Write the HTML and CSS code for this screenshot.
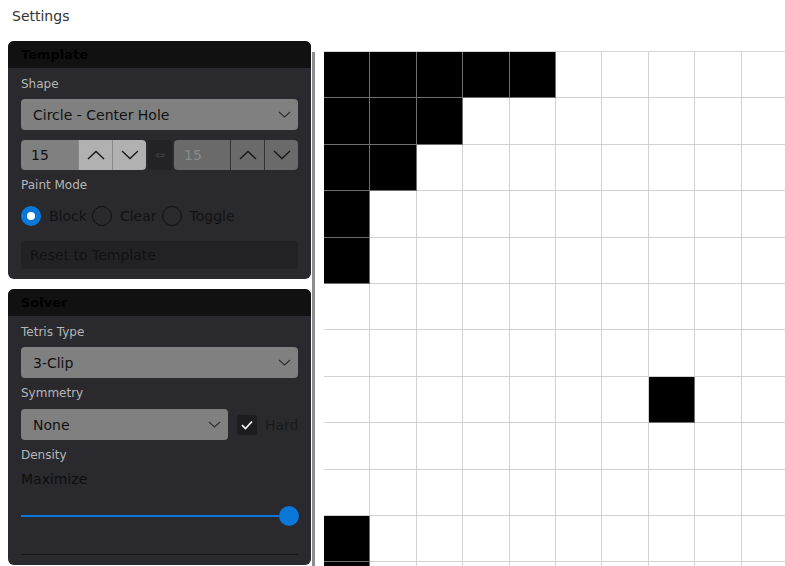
FILE: index.html
```html
<!DOCTYPE html>
<html lang="en">
<head>
<meta charset="UTF-8" />
<meta name="viewport" content="width=device-width, initial-scale=1" />
<title>Settings</title>
<link rel="stylesheet" href="styles.css">
</head>
<body>
<header class="title">Settings</header>
<div class="layout">
  <aside class="sidebar">
    <section class="panel">
      <div class="panel-head">Template</div>
      <div class="panel-body">
        <div class="label">Shape</div>
        <div class="select mt-7">
          <span>Circle - Center Hole</span>
          <svg class="chev" width="13" height="7" viewBox="0 0 13 7"><polyline points="1,1 6.5,6 12,1" /></svg>
        </div>
        <div class="num-row mt-10">
          <div class="num-group">
            <div class="num-field">15</div>
            <div class="num-btn"><svg width="18" height="10" viewBox="0 0 18 10"><polyline points="1,9 9,1.5 17,9" /></svg></div>
            <div class="num-btn"><svg width="18" height="10" viewBox="0 0 18 10"><polyline points="1,1 9,8.5 17,1" /></svg></div>
          </div>
          <div class="swap">&#8660;</div>
          <div class="num-group disabled">
            <div class="num-field">15</div>
            <div class="num-btn"><svg width="18" height="10" viewBox="0 0 18 10"><polyline points="1,9 9,1.5 17,9" /></svg></div>
            <div class="num-btn"><svg width="18" height="10" viewBox="0 0 18 10"><polyline points="1,1 9,8.5 17,1" /></svg></div>
          </div>
        </div>
        <div class="label mt-7">Paint Mode</div>
        <div class="radios mt-13">
          <span class="radio checked"></span><span class="radio-text">Block</span>
          <span class="radio"></span><span class="radio-text">Clear</span>
          <span class="radio"></span><span class="radio-text">Toggle</span>
        </div>
        <div class="button mt-15">Reset to Template</div>
      </div>
    </section>

    <section class="panel">
      <div class="panel-head">Solver</div>
      <div class="panel-body">
        <div class="label">Tetris Type</div>
        <div class="select mt-7">
          <span>3-Clip</span>
          <svg class="chev" width="13" height="7" viewBox="0 0 13 7"><polyline points="1,1 6.5,6 12,1" /></svg>
        </div>
        <div class="label mt-7">Symmetry</div>
        <div class="sym-row mt-8">
          <div class="select narrow">
            <span>None</span>
            <svg class="chev" width="13" height="7" viewBox="0 0 13 7"><polyline points="1,1 6.5,6 12,1" /></svg>
          </div>
          <span class="checkbox"><svg width="20" height="20" viewBox="0 0 20 20"><polyline points="5,10 8.5,13.5 15,6.5" /></svg></span>
          <span class="check-text">Hard</span>
        </div>
        <div class="label mt-7">Density</div>
        <div class="text-value mt-6">Maximize</div>
        <div class="slider mt-17">
          <div class="slider-track"></div>
          <div class="slider-thumb"></div>
        </div>
        <div class="rule mt-28"></div>
      </div>
    </section>
  </aside>
  <div class="divider"></div>
  <section class="board" id="board"></section>
</div>
<script>
  // 15x15 circle with a hole in the middle
  const size = 15;
  const edge = [5, 3, 2, 1, 1, 0, 0, 0, 0, 0, 1, 1, 2, 3, 5];
  const board = document.getElementById('board');

  for (let r = 0; r < size; r++) {
    for (let c = 0; c < size; c++) {
      const cell = document.createElement('div');
      cell.className = 'cell';
      const blocked = c < edge[r] || c >= size - edge[r] || (r === 7 && c === 7);
      if (blocked) cell.classList.add('block');
      board.appendChild(cell);
    }
  }
</script>
</body>
</html>
```

FILE: styles.css
```css
* {
  box-sizing: border-box;
}
body {
  margin: 0;
  font-family: 'DejaVu Sans', 'Noto Sans', sans-serif;
  background: #fff;
  overflow: hidden;
  height: 100vh;
}
.title {
  height: 41px;
  padding: 6px 12px 0;
  font-size: 14px;
  line-height: 20px;
  color: #333;
}
.layout {
  display: flex;
  align-items: flex-start;
  padding-left: 8px;
  height: calc(100vh - 41px);
}
.sidebar {
  width: 303px;
  flex-shrink: 0;
  display: flex;
  flex-direction: column;
  gap: 10px;
}
.divider {
  width: 3px;
  flex-shrink: 0;
  align-self: stretch;
  margin: 11px 0 0 1px;
  background: #8e8e8e;
}
.board {
  flex-shrink: 0;
  margin: 10px 0 0 9px;
  display: grid;
  grid-template-columns: repeat(15, 46.4px);
  grid-auto-rows: 46.4px;
  border-top: 1px solid #d6d6d6;
}
.cell {
  background: #fff;
  border-right: 1px solid #d2d2d2;
  border-bottom: 1px solid #d2d2d2;
}
.cell.block {
  background: #000;
  border-color: #6e6e6e;
}

/* panels */
.panel {
  background: #29292e;
  border-radius: 6px;
  overflow: hidden;
}
.panel-head {
  height: 27px;
  background: #111;
  padding: 0 13px;
  font-size: 13px;
  font-weight: bold;
  line-height: 28px;
  color: #000;
}
.panel-body {
  padding: 8px 13px 10px;
}
.mt-6 { margin-top: 6px; }
.mt-7 { margin-top: 7px; }
.mt-8 { margin-top: 8px; }
.mt-10 { margin-top: 10px; }
.mt-13 { margin-top: 13px; }
.mt-15 { margin-top: 15px; }
.mt-17 { margin-top: 17px; }
.mt-28 { margin-top: 28px; }

.label {
  font-size: 12px;
  line-height: 16px;
  color: #b6b6b6;
}
.select {
  height: 31px;
  background: #808080;
  border-radius: 4px;
  display: flex;
  align-items: center;
  justify-content: space-between;
  padding: 0 7px 0 12px;
  font-size: 14px;
  color: #111;
}
.chev polyline {
  fill: none;
  stroke: #2e2e2e;
  stroke-width: 1.1;
}

/* number inputs */
.num-row {
  display: flex;
  height: 30px;
  gap: 2px;
}
.num-group {
  display: flex;
  width: 125px;
  border-radius: 4px;
  overflow: hidden;
}
.num-group.disabled {
  flex: 1;
}
.num-field {
  flex: 1;
  background: #808080;
  font-size: 14px;
  line-height: 30px;
  padding-left: 10px;
  color: #111;
}
.num-btn {
  width: 34px;
  display: flex;
  align-items: center;
  justify-content: center;
  background: #b1b1b1;
  border-left: 1px solid #8a8a8a;
}
.num-btn polyline {
  fill: none;
  stroke: #151515;
  stroke-width: 1.3;
}
.num-group.disabled .num-field,
.num-group.disabled .num-btn {
  background: #6a6a6a;
}
.num-group.disabled .num-field {
  color: #8a8a8a;
}
.num-group.disabled .num-btn {
  border-left-color: #333;
}
.swap {
  width: 24px;
  background: #232326;
  border-radius: 3px;
  color: #3c3c3c;
  font-size: 12px;
  line-height: 30px;
  text-align: center;
}

/* paint mode */
.radios {
  display: flex;
  align-items: center;
  height: 20px;
}
.radio {
  width: 20px;
  height: 20px;
  border-radius: 50%;
  border: 1px solid #111;
  flex-shrink: 0;
}
.radio.checked {
  border: 6px solid #0a78d8;
  background: #fff;
}
.radio-text {
  font-size: 14px;
  color: #121212;
  margin: 0 5px 0 8px;
}
.button {
  height: 28px;
  background: #222226;
  border-radius: 3px;
  padding-left: 9px;
  font-size: 14px;
  line-height: 28px;
  color: #111;
}

/* solver */
.sym-row {
  display: flex;
  align-items: center;
}
.select.narrow {
  width: 207px;
  flex-shrink: 0;
  margin-right: 9px;
}
.checkbox {
  width: 20px;
  height: 20px;
  flex-shrink: 0;
  background: #1d1d20;
  border-radius: 3px;
}
.checkbox svg {
  display: block;
}
.checkbox polyline {
  fill: none;
  stroke: #fff;
  stroke-width: 1.6;
}
.check-text {
  font-size: 14px;
  color: #1a1a1a;
  margin-left: 8px;
  white-space: nowrap;
}
.text-value {
  font-size: 14px;
  line-height: 20px;
  color: #0e0e0e;
}
.slider {
  display: flex;
  align-items: center;
  height: 20px;
}
.slider-track {
  flex: 1;
  height: 2px;
  background: #0a78d8;
  margin-right: -10px;
}
.slider-thumb {
  width: 20px;
  height: 20px;
  border-radius: 50%;
  background: #0a78d8;
  margin-right: -1px;
}
.rule {
  border-top: 1px solid #141414;
}
```
